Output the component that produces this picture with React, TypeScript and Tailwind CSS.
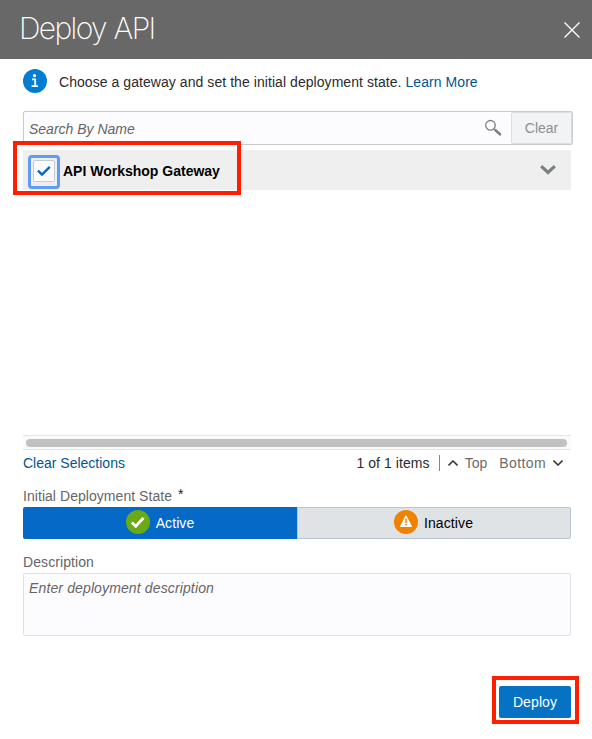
import React from "react";

function Header() {
  return (
    <header className="flex h-[59px] items-center justify-between bg-[#686868] pl-[19px] pr-[12px]">
      <h1 className="mt-[-3px] font-[Inter,sans-serif] text-[30px] font-extralight leading-[36px] tracking-[-1.65px] text-white [word-spacing:1px]">Deploy API</h1>
      <svg width="16" height="16" viewBox="0 0 16 16" fill="none" stroke="white" strokeWidth="1.4" className="mt-px">
        <path d="M.5.5l15 15M15.5.5l-15 15" />
      </svg>
    </header>
  );
}

function Intro() {
  return (
    <div className="mt-[10px] flex h-6 items-center">
      <svg width="24" height="24" viewBox="0 0 24 24">
        <circle cx="12" cy="12" r="12" fill="#037dd1" />
        <circle cx="11.5" cy="6.7" r="1.6" fill="white" />
        <path d="M9 10.3h3.2v6.9M8.6 17.2h6.4" fill="none" stroke="white" strokeWidth="1.8" />
      </svg>
      <p className="ml-3 mt-[2px] whitespace-pre tracking-[0.06px] text-[#2b2b2b]">
        Choose a gateway and set the initial deployment state. <a className="text-[#00568f]">Learn More</a>
      </p>
    </div>
  );
}

function SearchBar() {
  return (
    <div className="mt-[18px] flex h-[34px] w-[550px] items-stretch rounded-[2px] border border-[#c8cbce] bg-[#fcfcff]">
      <span className="flex flex-1 items-center pl-[5px] pt-px italic text-[#666]">Search By Name</span>
      <svg width="18" height="18" viewBox="0 0 18 18" fill="none" className="mr-[9px] mt-[7px]">
        <circle cx="6.5" cy="6.3" r="4.8" stroke="#7e8182" strokeWidth="1.3" />
        <path d="M10 9.8l1.6 1.5" stroke="#7e8182" strokeWidth="1.2" />
        <path d="M11.5 11.2l4.5 4.1" stroke="#7e8182" strokeWidth="2.6" strokeLinecap="round" />
      </svg>
      <button className="w-[61px] rounded-[2px] border border-[#dadee1] bg-[#f2f3f5] text-[#8d8f91]">Clear</button>
    </div>
  );
}

function GatewayRow() {
  return (
    <div className="relative mt-[5px] flex h-10 items-center bg-[#efefef] pl-[5px] pr-[15px]">
      <span className="mt-[4px] flex h-[34px] w-[32px] shrink-0 items-center justify-center rounded-[4px] border-[3px] border-[#5f9cf5] bg-[#efefef] pb-[2px]">
        <span className="flex h-[22px] w-[22px] items-center justify-center rounded-[2px] border border-[#c3ccd5] bg-[#fcfcff]">
          <svg width="14" height="12" viewBox="0 0 14 12" fill="none" stroke="#0569cc" strokeWidth="2.4">
            <path d="M1 5.6l4 4L12.8 1.8" />
          </svg>
        </span>
      </span>
      <span className="ml-[3px] mt-px font-bold text-black">API Workshop Gateway</span>
      <svg width="16" height="10" viewBox="0 0 16 10" fill="none" stroke="#7b8084" strokeWidth="3.2" className="ml-auto">
        <path d="M1.2 1.2L8 7.5l6.8-6.3" />
      </svg>
      <span className="pointer-events-none absolute left-[-10px] top-[-9px] h-[54px] w-[228px] border-4 border-[#ff1f00]" />
    </div>
  );
}

function ListFooter() {
  return (
    <div className="mt-[4px] flex h-[18px] items-center text-[#6b6b6b]">
      <a className="text-[#00568f]">Clear Selections</a>
      <span className="ml-auto tracking-[0.07px] text-[#2b2b2b]">1 of 1 items</span>
      <span className="ml-[9px] h-4 w-px bg-[#858585]" />
      <svg width="10" height="6" viewBox="0 0 10 6" fill="none" stroke="#333" strokeWidth="1.5" className="ml-[8px]">
        <path d="M.5 5.4L5 1l4.5 4.4" />
      </svg>
      <span className="ml-[7px]">Top</span>
      <span className="ml-[12px] tracking-[0.4px]">Bottom</span>
      <svg width="10" height="6" viewBox="0 0 10 6" fill="none" stroke="#333" strokeWidth="1.5" className="ml-[7px] mr-[8px]">
        <path d="M.5.6L5 5 9.5.6" />
      </svg>
    </div>
  );
}

function StateToggle() {
  return (
    <div className="mt-[2px] flex h-8">
      <button className="flex w-[274px] items-center justify-center rounded-l-[2px] bg-[#0569c8] text-white">
        <svg width="24" height="24" viewBox="0 0 24 24" fill="none" className="mr-[6px] mt-[-2px]">
          <circle cx="12" cy="12" r="12" fill="#69ab14" />
          <path d="M5.8 12.5l4 3.8 7.7-8.4" stroke="white" strokeWidth="2.8" />
        </svg>
        <span className="tracking-[0.1px]">Active</span>
      </button>
      <button className="flex flex-1 items-center justify-center rounded-r-[2px] border border-[#b9c4ce] bg-[#dfe3e6] text-black">
        <svg width="24" height="24" viewBox="0 0 24 24" className="mr-[6px] mt-[-2px]">
          <circle cx="12" cy="12" r="12" fill="#ef8200" />
          <path d="M12 6l5.4 10.5H6.6z" fill="white" stroke="white" strokeWidth="1.2" strokeLinejoin="round" />
          <path d="M12 8.6v4.3M12 14v1.6" stroke="#ef8200" strokeWidth="1.5" />
        </svg>
        <span className="mr-px tracking-[0.1px]">Inactive</span>
      </button>
    </div>
  );
}

export default function App() {
  return (
    <div className="h-[739px] w-[592px] overflow-hidden bg-white font-['Liberation_Sans',sans-serif] text-[14px] leading-[18px]">
      <Header />
      <main className="flex w-[571px] flex-col pl-[23px]">
        <Intro />
        <SearchBar />
        <GatewayRow />
        <div className="mt-[245px] h-[15px] border-y border-[#e4e4e4] bg-[#fafafa] pl-[3px] pr-[4px] pt-[3px]">
          <div className="h-2 rounded-full bg-[#c1c1c1]" />
        </div>
        <ListFooter />
        <label className="mt-[15px] h-[18px] tracking-[0.05px] text-[#666]">
          Initial Deployment State <span className="relative top-[-2px] ml-[2px] text-[#222]">*</span>
        </label>
        <StateToggle />
        <label className="mt-[14px] tracking-[0.08px] text-[#666]">Description</label>
        <div className="mt-[2px] h-[63px] rounded-[2px] border border-[#dfe1e4] bg-[#fcfcff] pl-[5px] pt-[5px] italic tracking-[0.13px] text-[#666]">
          Enter deployment description
        </div>
        <div className="relative mt-[50px] h-8 w-[72px] self-end">
          <button className="h-8 w-[72px] rounded-[2px] bg-[#0572c4] tracking-[0.1px] text-white">Deploy</button>
          <span className="pointer-events-none absolute left-[-7px] top-[-10px] h-[48px] w-[87px] border-4 border-[#ff1f00]" />
        </div>
      </main>
    </div>
  );
}
